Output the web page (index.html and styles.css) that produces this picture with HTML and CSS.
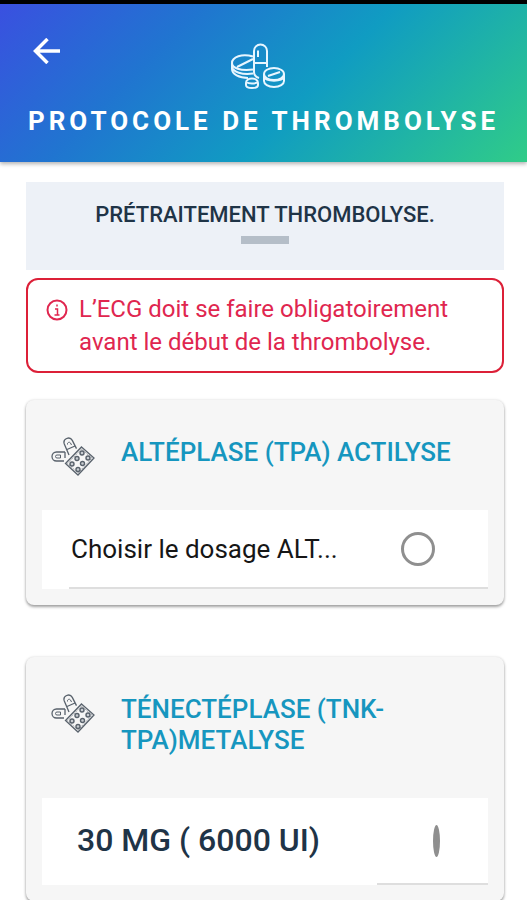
FILE: index.html
```html
<!DOCTYPE html>
<html lang="fr">
	<head>
		<meta charset="utf-8">
		<meta name="viewport" content="width=device-width, initial-scale=1">
		<title>Protocole de thrombolyse</title>
		<link rel="stylesheet" href="styles.css">
	</head>
	<body>
		<svg class="sprite" aria-hidden="true">
			<symbol id="blister" viewBox="0 0 44 40">
				<g fill="none" stroke="#59626c" stroke-width="1.3">
					<path d="M14 15H5.500a4.500 4.500 0 0 0 0 9H13M14 15v6"/>
					<path d="M9.500 18H6a1.500 1.500 0 0 0 0 3h3.500z" stroke-width="1"/>
					<path d="M18 18 13.300 7a4.400 4.400 0 0 1 8-3.600l4.200 8.200M16 12.500l8-3.500"/>
					<path d="M16.500 7.500a1.700 1.700 0 0 1 3-1.500l1 2" stroke-width="1"/>
					<path d="M30.500 10 43 21 27 38 14.500 26.500z"/>
					<path d="M30.500 12 41 21.200 27 36 16.500 26.400z" stroke-width=".6" stroke-dasharray="1.500 1"/>
					<g stroke-width="1.400" fill="#c9cdd2">
						<circle cx="31" cy="16" r="2"/>
						<circle cx="37" cy="21" r="2"/>
						<circle cx="26" cy="21.500" r="2"/>
						<circle cx="31.500" cy="26.500" r="2"/>
						<circle cx="21" cy="27" r="2"/>
						<circle cx="27" cy="32.500" r="2"/>
					</g>
				</g>
			</symbol>
		</svg>

		<header class="header">
			<button class="back" type="button" aria-label="Retour">
				<svg width="28" height="26" viewBox="0 0 28 26" fill="none" stroke="#fff" stroke-width="3.500">
					<path d="M27 13H3M14.500 1 2.500 13l12 12"/>
				</svg>
			</button>
			<svg class="logo" width="56" height="46" viewBox="0 0 56 46" fill="none" stroke="#e8f6ff" stroke-width="2">
				<path d="M23 13.500C12 10 2 14 2 20v6c0 5 7 9 16 9"/>
				<path d="M2 20c0 5 8 8 21 6.500M7 24l16-8M2 24c1 5 10 8 21 6.500"/>
				<path d="M29 35c-3-1-5-3-5-6V8a6.500 6.500 0 0 1 13 0v16M24 20h13M28 14V7.500"/>
				<ellipse cx="44" cy="31" rx="10" ry="6"/>
				<path d="M34 31v7c0 3 4 6 10 6s10-3 10-6v-7M34 34c2 5 18 5 20 0M38 33l12-4"/>
				<path d="M16 40c0-6 12-6 12 0v2c0 4-12 4-12 0zM16 39c3 2 9 2 12 0"/>
			</svg>
			<h1 class="title">PROTOCOLE DE THROMBOLYSE</h1>
		</header>

		<main class="content">
			<h2 class="section">PRÉTRAITEMENT THROMBOLYSE.</h2>

			<div class="warning">
				<svg width="22" height="22" viewBox="0 0 22 22" fill="none" stroke="#e0264f" stroke-width="2">
					<circle cx="11" cy="11" r="9.500"/>
					<path d="M9 10h2.500v6M8.500 16h5M11 5.500v2" stroke-width="1.500"/>
				</svg>
				<p class="warning-text">L’ECG doit se faire obligatoirement avant le début de la thrombolyse.</p>
			</div>

			<section class="card">
				<div class="card-head">
					<svg class="card-icon"><use href="#blister"/></svg>
					<h3 class="card-title">ALTÉPLASE (TPA) ACTILYSE</h3>
				</div>
				<div class="item">
					<div class="item-line">
						<label class="item-label" for="alt">Choisir le dosage ALT...</label>
						<input class="radio" type="radio" id="alt" name="dosage">
					</div>
				</div>
			</section>

			<section class="card">
				<div class="card-head">
					<svg class="card-icon"><use href="#blister"/></svg>
					<h3 class="card-title">TÉNECTÉPLASE (TNK-TPA)METALYSE</h3>
				</div>
				<div class="item item-dose">
					<label class="dose-label" for="tnk">30 MG ( 6000 UI)</label>
					<div class="dose-end">
						<input class="radio radio-thin" type="radio" id="tnk" name="dosage">
					</div>
				</div>
			</section>
		</main>
	</body>
</html>
```

FILE: styles.css
```css
* {
	margin: 0;
	padding: 0;
	box-sizing: border-box;
}

body {
	background: #fff;
	font-family: Roboto, "Liberation Sans", sans-serif;
	color: #1f3447;
}

svg {
	display: block;
	flex: none;
}

.sprite {
	position: absolute;
	width: 0;
	height: 0;
}

/* header */
.header {
	position: relative;
	display: flex;
	flex-direction: column;
	align-items: center;
	height: 162px;
	padding-top: 39px;
	border-top: 4px solid #000;
	background: linear-gradient(135deg, #3a50e0 0%, #2075d0 30%, #109cc2 58%, #30cc88 100%);
	box-shadow: 0 2px 4px rgba(0, 0, 0, .3);
}

.back {
	position: absolute;
	left: 33px;
	top: 34px;
	border: 0;
	background: none;
	cursor: pointer;
}

.logo {
	margin-left: -12px;
}

.title {
	margin-top: 16px;
	font-size: 26px;
	line-height: 32px;
	font-weight: 700;
	letter-spacing: 4px;
	white-space: nowrap;
	color: #fff;
}

/* content */
.content {
	padding: 20px 23px 24px 26px;
}

.section {
	height: 88px;
	padding-top: 18px;
	background: #edf1f7;
	font-size: 22px;
	line-height: 30px;
	font-weight: 500;
	text-align: center;
}

.section::after {
	content: "";
	display: block;
	width: 48px;
	height: 8px;
	margin: 6px auto 0;
	background: #b5bec8;
}

.warning {
	display: flex;
	gap: 11px;
	margin-top: 8px;
	padding: 13px 18px 12px;
	border: 2px solid #dc2038;
	border-radius: 12px;
}

.warning svg {
	margin-top: 6px;
}

.warning-text {
	font-size: 24px;
	line-height: 33px;
	color: #e0264f;
}

.card {
	margin-top: 27px;
	padding: 16px;
	border-radius: 8px;
	background: #f6f6f6;
	box-shadow: 0 2px 3px rgba(0, 0, 0, .35), 0 0 3px rgba(0, 0, 0, .12);
}

.card + .card {
	margin-top: 52px;
}

.card-head {
	display: flex;
	gap: 26px;
	padding: 21px 9px 33px;
}

.card-icon {
	width: 44px;
	height: 40px;
}

.card-title {
	padding-bottom: 9px;
	font-size: 26px;
	line-height: 31px;
	font-weight: 500;
	color: #1696bf;
}

.item {
	padding-left: 27px;
	background: #fff;
}

.item-line {
	display: flex;
	align-items: center;
	justify-content: space-between;
	height: 79px;
	padding: 0 53px 0 2px;
	border-bottom: 2px solid #dedede;
}

.item-label {
	font-size: 26px;
	line-height: 32px;
	color: #161616;
}

.radio {
	appearance: none;
	width: 34px;
	height: 34px;
	border: 3px solid #8f8f8f;
	border-radius: 50%;
	background: #fff;
}

.item-dose {
	display: flex;
	height: 87px;
	padding-left: 35px;
}

.dose-label {
	flex: 1;
	align-self: center;
	padding-bottom: 4px;
	font-size: 32px;
	line-height: 36px;
	font-weight: 500;
}

.dose-end {
	display: flex;
	align-items: center;
	justify-content: center;
	width: 111px;
	padding-left: 8px;
	border-bottom: 2px solid #dedede;
}

.radio-thin {
	width: 7px;
	height: 32px;
	background: #8f8f8f;
}
```
